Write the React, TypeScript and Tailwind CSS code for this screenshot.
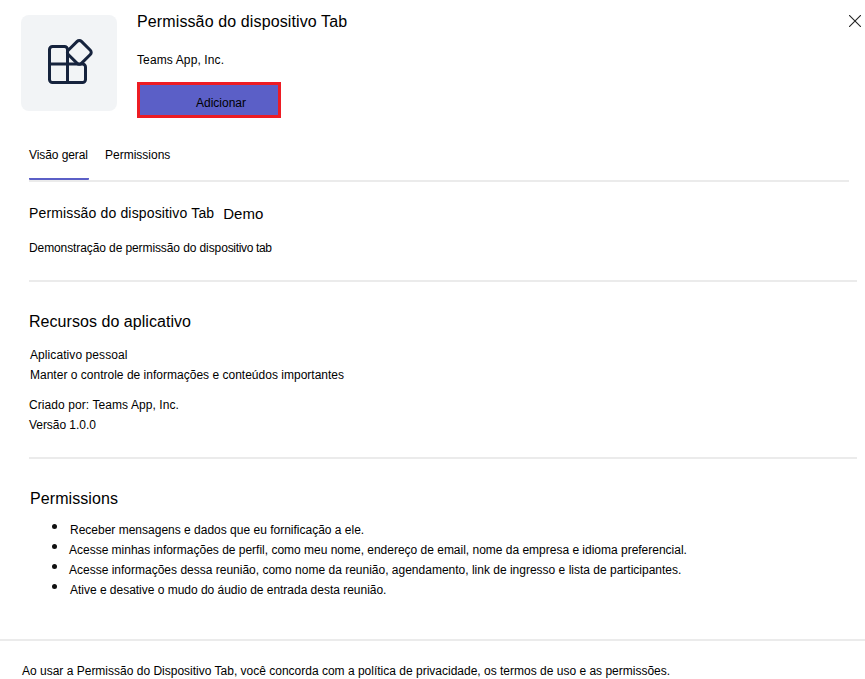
const permissions = [
  { text: 'Receber mensagens e dados que eu fornificação a ele.', style: 'pl-[70px]' },
  { text: 'Acesse minhas informações de perfil, como meu nome, endereço de email, nome da empresa e idioma preferencial.', style: 'pl-[69px] tracking-[-0.01px]' },
  { text: 'Acesse informações dessa reunião, como nome da reunião, agendamento, link de ingresso e lista de participantes.', style: 'pl-[69px]' },
  { text: 'Ative e desative o mudo do áudio de entrada desta reunião.', style: 'pl-[70px] tracking-[-0.02px]' },
];

function AppIcon() {
  return (
    <div className="mt-[15px] flex h-24 w-24 shrink-0 items-center justify-center rounded-lg bg-[#f2f4f6]">
      <svg width="96" height="96" viewBox="0 0 96 96" fill="none" stroke="#16233d" strokeWidth="3" strokeLinejoin="round">
        <path d="M43.500 31.500H31.500a3 3 0 0 0-3 3v30a3 3 0 0 0 3 3h30a3 3 0 0 0 3-3V52a3 3 0 0 0-3-3h-33M46.500 67.500V34.500a3 3 0 0 0-3-3" />
        <rect x="49" y="28.100" width="18.600" height="18.600" rx="3" transform="rotate(45 58.300 37.400)" />
      </svg>
    </div>
  );
}

export default function App() {
  return (
    <main className="flex h-[679px] w-[865px] flex-col overflow-hidden bg-white font-['Liberation_Sans',Arial,sans-serif] text-xs leading-5 whitespace-nowrap text-black">
      <header className="flex h-[145px] pl-[21px]">
        <AppIcon />
        <div className="flex flex-1 flex-col items-start pl-5">
          <h1 className="mt-3 text-base leading-5 tracking-[0.12px]">Permissão do dispositivo Tab</h1>
          <p className="mt-[18px] tracking-[0.12px]">Teams App, Inc.</p>
          <button className="mt-3 h-9 w-36 border-3 border-[#ed1c24] bg-[#5b5fc7] pb-0 pl-14 text-left leading-5"><span className="block pt-[5px]">Adicionar</span></button>
        </div>
        <button aria-label="Fechar" className="mt-[15px] mr-1 h-3 w-3">
          <svg width="12" height="12" viewBox="0 0 12 12" stroke="#242424" strokeWidth="1.100"><path d="M0 0l12 12M12 0L0 12" /></svg>
        </button>
      </header>

      <nav className="mr-4 ml-[29px] flex h-[37px] border-b-2 border-[#ebebeb]">
        <div className="h-[35px] w-[60px] rounded-b-[1px] border-b-2 border-[#5b5fc7] tracking-[-0.08px]">Visão geral</div>
        <div className="ml-4">Permissions</div>
      </nav>

      <section className="mr-2 ml-[29px] h-[100px] border-b-2 border-[#ebebeb] pt-[21px]">
        <h2 className="flex h-[35px] text-sm leading-5">
          <span className="tracking-[0.15px]">Permissão do dispositivo Tab</span>
          <span className="mt-px ml-[9px] text-[15px]">Demo</span>
        </h2>
        <p className="tracking-[-0.1px]">Demonstração de permissão do dispo<span className="tracking-[-0.35px]">sitivo tab</span></p>
      </section>

      <section className="mr-2 ml-[29px] h-[177px] border-b-2 border-[#ebebeb] pt-[30px]">
        <h2 className="mb-[13px] text-base leading-5 tracking-[0.05px]">Recursos do aplicativo</h2>
        <p className="pl-px tracking-[0.08px]">Aplicativo pessoal</p>
        <p className="pl-px tracking-[0.01px]">Manter o controle de informações e conteúdos importantes</p>
        <p className="mt-2.5 tracking-[0.08px]">Criado por: Teams App, Inc.</p>
        <p className="tracking-[-0.05px]">Versão 1.0.0</p>
      </section>

      <section className="h-[182px] border-b-2 border-[#ebebeb] pt-[30px]">
        <h2 className="mb-[11px] pl-[30px] text-base leading-5 tracking-[0.08px]">Permissions</h2>
        <ul>
          {permissions.map((p) => (
            <li key={p.text} className={`relative ${p.style}`}>
              <i className="absolute top-1 left-[52px] h-[5px] w-[5px] rounded-full bg-[#111]" />
              {p.text}
            </li>
          ))}
        </ul>
      </section>

      <footer className="pt-[22px] pl-[22px] leading-4">Ao usar a Permissão do Dispositivo Tab, você concorda com a política de privacidade, os termos de uso e as permissões.</footer>
    </main>
  );
}
